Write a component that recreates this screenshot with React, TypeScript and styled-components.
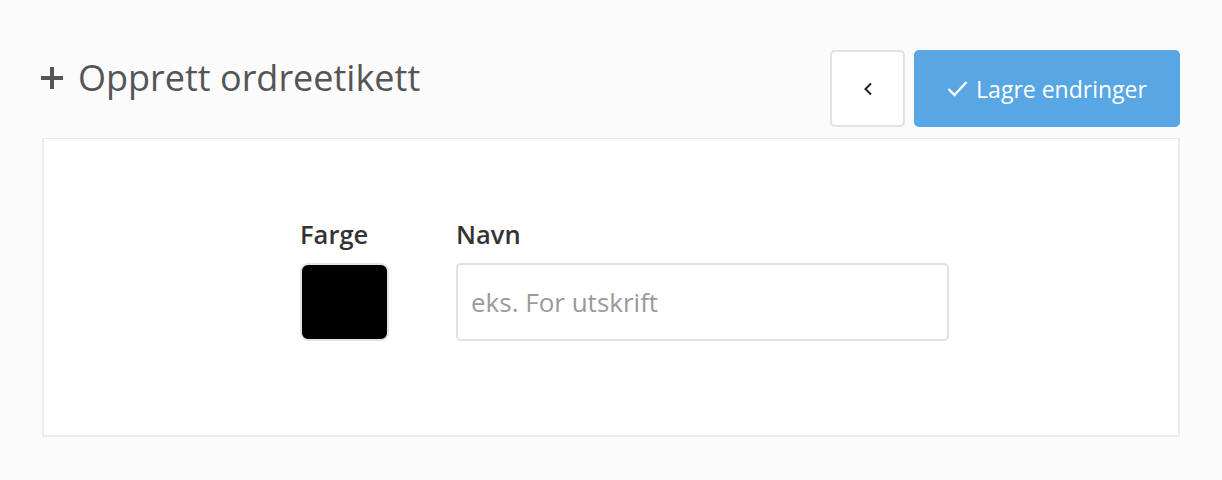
import styled, { createGlobalStyle } from "styled-components";

const GlobalStyle = createGlobalStyle`
  html, body {
    margin: 0;
    padding: 0;
    background: #fbfbfb;
    font-family: "Open Sans", "Liberation Sans", sans-serif;
  }
`

const Page = styled.div`
  padding: 50px 42px 0 42px;
`

const Header = styled.div`
  display: flex;
  justify-content: space-between;
  align-items: flex-start;
`

const Title = styled.h1`
  display: flex;
  align-items: center;
  gap: 14px;
  margin: 6px 0 0 -2px;
  font-size: 36px;
  font-weight: 400;
  line-height: 44px;
  color: #555555;
`

const Actions = styled.div`
  display: flex;
  gap: 9px;
`

const Button = styled.button<{ primary?: boolean }>`
  display: flex;
  align-items: center;
  justify-content: center;
  gap: 8px;
  height: 77px;
  padding: 0;
  width: ${props => props.primary ? '266px' : '75px'};
  border-radius: 5px;
  border: 2px solid ${props => props.primary ? '#58a7e4' : '#e2e2e2'};
  background: ${props => props.primary ? '#58a7e4' : '#ffffff'};
  color: ${props => props.primary ? '#ffffff' : '#222222'};
  font-family: "Open Sans", "Liberation Sans", sans-serif;
  font-size: 23px;
  font-weight: 400;
  cursor: pointer;
`

const Card = styled.div`
  margin-top: 11px;
  height: 299px;
  box-sizing: border-box;
  background: #ffffff;
  border: 2px solid #ececec;
  border-top-width: 1px;
  padding: 78px 0 0 256px;
  display: flex;
  gap: 67px;
`

const Field = styled.div`
  display: flex;
  flex-direction: column;
  gap: 12px;
`

const Label = styled.label`
  font-size: 25.5px;
  font-weight: 600;
  line-height: 34px;
  color: #333333;
`

const Swatch = styled.div<{ color: string }>`
  width: 89px;
  height: 78px;
  box-sizing: border-box;
  border-radius: 8px;
  border: 2px solid #e4e4e4;
  background: ${props => props.color};
`

const Input = styled.input`
  width: 493px;
  height: 78px;
  box-sizing: border-box;
  border: 2px solid #e2e2e2;
  border-radius: 5px;
  padding: 0 13px;
  font-family: "Open Sans", "Liberation Sans", sans-serif;
  font-size: 26px;
  color: #333333;
  outline: none;
  &::placeholder {
    color: #9a9a9a;
  }
`

export default function App() {
  return (
    <>
      <GlobalStyle />
      <Page>
        <Header>
          <Title>
            <svg width="24" height="24" viewBox="0 0 24 24">
              <path d="M12 1v22M1 12h22" stroke="#555555" strokeWidth="4" />
            </svg>
            Opprett ordreetikett
          </Title>
          <Actions>
            <Button>
              <svg width="10" height="14" viewBox="0 0 10 14">
                <path d="M8 1.5 2.5 7 8 12.5" fill="none" stroke="#222222" strokeWidth="2" />
              </svg>
            </Button>
            <Button primary>
              <svg width="21" height="17" viewBox="0 0 21 17">
                <path d="M1.5 9 7.5 15 19.5 2" fill="none" stroke="#ffffff" strokeWidth="2.4" />
              </svg>
              Lagre endringer
            </Button>
          </Actions>
        </Header>
        <Card>
          <Field>
            <Label>Farge</Label>
            <Swatch color="#000000" />
          </Field>
          <Field>
            <Label>Navn</Label>
            <Input placeholder="eks. For utskrift" />
          </Field>
        </Card>
      </Page>
    </>
  )
}
